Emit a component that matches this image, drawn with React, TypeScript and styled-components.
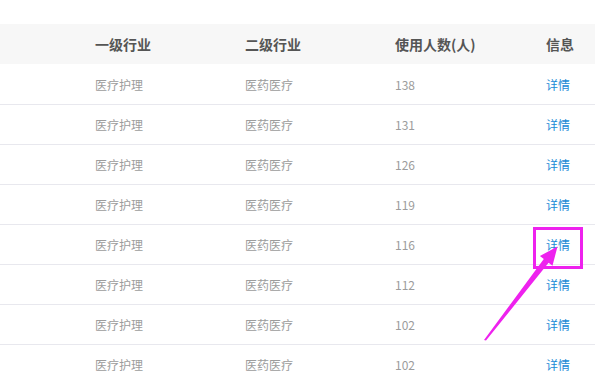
import { createGlobalStyle, styled } from "styled-components";

const GlobalStyle = createGlobalStyle`
  body {
    margin: 0;
    background: #fff;
    font-family: "Noto Sans CJK SC", "Liberation Sans", sans-serif;
  }
`;

type Row = {
  first: string;
  second: string;
  users: number;
};

const rows: Array<Row> = [
  { first: "医疗护理", second: "医药医疗", users: 138 },
  { first: "医疗护理", second: "医药医疗", users: 131 },
  { first: "医疗护理", second: "医药医疗", users: 126 },
  { first: "医疗护理", second: "医药医疗", users: 119 },
  { first: "医疗护理", second: "医药医疗", users: 116 },
  { first: "医疗护理", second: "医药医疗", users: 112 },
  { first: "医疗护理", second: "医药医疗", users: 102 },
  { first: "医疗护理", second: "医药医疗", users: 102 },
];

const Page = styled.div`
  position: relative;
  width: 604px;
  height: 371px;
  overflow: hidden;
  padding-top: 24px;
  box-sizing: border-box;
`;

const Table = styled.div`
  width: 595px;
`;

const Line = styled.div<{ $head?: boolean }>`
  display: grid;
  grid-template-columns: 95px 150px 150px 151px 1fr;
  align-items: center;
  height: ${({ $head }) => ($head ? "40px" : "39px")};
  background: ${({ $head }) => ($head ? "#f7f7f7" : "#fff")};
  border-bottom: 1px solid ${({ $head }) => ($head ? "#fff" : "#e8e8ee")};
`;

const HeadCell = styled.div`
  font-size: 14px;
  font-weight: bold;
  color: #555;
  white-space: nowrap;
`;

const Cell = styled.div`
  font-size: 12px;
  color: #9c9c9c;
  white-space: nowrap;
`;

const Link = styled.a`
  font-size: 12px;
  color: #1a8ad6;
  text-decoration: none;
  cursor: pointer;
`;

const Highlight = styled.div`
  position: absolute;
  left: 533px;
  top: 227px;
  width: 44px;
  height: 36px;
  border: 3px solid #ee22ee;
`;

const Overlay = styled.svg`
  position: absolute;
  left: 0;
  top: 0;
  pointer-events: none;
`;

export default function App() {
  return (
    <>
      <GlobalStyle />
      <Page>
        <Table>
          <Line $head>
            <span />
            <HeadCell>一级行业</HeadCell>
            <HeadCell>二级行业</HeadCell>
            <HeadCell>使用人数(人)</HeadCell>
            <HeadCell>信息</HeadCell>
          </Line>
          {rows.map((row, index) => (
            <Line key={index}>
              <span />
              <Cell>{row.first}</Cell>
              <Cell>{row.second}</Cell>
              <Cell>{row.users}</Cell>
              <Link>详情</Link>
            </Line>
          ))}
        </Table>
        <Highlight />
        <Overlay width="604" height="371" viewBox="0 0 604 371">
          <polygon
            fill="#ee22ee"
            points="484,340 486,340.5 548.6,262.7 552.5,265.8 557.5,246.5 539.9,256 543.8,259.1"
          />
        </Overlay>
      </Page>
    </>
  );
}
